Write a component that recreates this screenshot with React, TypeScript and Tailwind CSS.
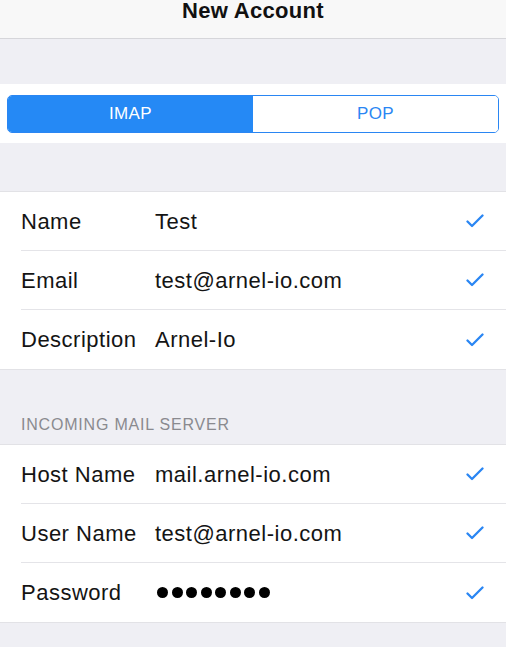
import React from 'react';

const Check: React.FC = () => (
  <svg width="18" height="14" viewBox="0 0 18 14" fill="none" className="shrink-0">
    <path d="M1.5 7.5 L6 12 L16.5 1.5" stroke="#2a86f3" strokeWidth="2.3" strokeLinecap="round" strokeLinejoin="round" />
  </svg>
);

type Field = { label: string; value: React.ReactNode };

const Group: React.FC<{ rows: Field[] }> = ({ rows }) => (
  <div className="bg-white border-b border-[#e2e2e6]">
    {rows.map((r, i) => (
      <div key={r.label} className="pl-[21px]">
        <div
          className={
            'flex items-center h-[59px] pr-[22px] ' +
            (i < rows.length - 1 ? 'border-b border-[#e4e4e8]' : '')
          }
        >
          <span className="w-[134px] shrink-0 text-[22px] tracking-[0.5px] text-[#141414]">{r.label}</span>
          <span className="flex-1 text-[22px] tracking-[0.5px] text-[#141414]">{r.value}</span>
          <Check />
        </div>
      </div>
    ))}
  </div>
);

const Dots: React.FC = () => (
  <span className="flex items-center gap-[3.5px] pl-[2px]">
    {Array.from({ length: 8 }).map((_, i) => (
      <span key={i} className="block w-[11px] h-[11px] rounded-full bg-black" />
    ))}
  </span>
);

export default function App() {
  return (
    <div className="w-[506px] h-[647px] overflow-hidden bg-[#efeff4] font-['Liberation_Sans',Arial,sans-serif]">
      <div className="h-[39px] bg-[#f8f8f8] border-b border-[#d6d6da] flex justify-center">
        <span className="text-[22px] leading-[22px] font-bold tracking-[0.3px] text-[#111]">New Account</span>
      </div>

      <div className="h-[45px]" />

      <div className="bg-white pt-[11px] pb-[10px] px-[7px]">
        <div className="flex h-[38px] rounded-[5px] border border-[#2a86f3] overflow-hidden">
          <div className="flex-1 bg-[#2589f5] flex items-center justify-center text-white text-[17px] tracking-[0.4px]">
            IMAP
          </div>
          <div className="flex-1 bg-white flex items-center justify-center text-[#2a86f3] text-[17px] tracking-[0.4px]">
            POP
          </div>
        </div>
      </div>

      <div className="h-[49px] border-b border-[#e2e2e6]" />

      <Group
        rows={[
          { label: 'Name', value: 'Test' },
          { label: 'Email', value: 'test@arnel-io.com' },
          { label: 'Description', value: 'Arnel-Io' },
        ]}
      />

      <div className="h-[75px] flex items-end pl-[21px] pb-[11px] border-b border-[#e2e2e6]">
        <span className="text-[16px] leading-[16px] text-[#8a8a8f] tracking-[0.8px]">INCOMING MAIL SERVER</span>
      </div>

      <Group
        rows={[
          { label: 'Host Name', value: 'mail.arnel-io.com' },
          { label: 'User Name', value: 'test@arnel-io.com' },
          { label: 'Password', value: <Dots /> },
        ]}
      />
    </div>
  );
}
